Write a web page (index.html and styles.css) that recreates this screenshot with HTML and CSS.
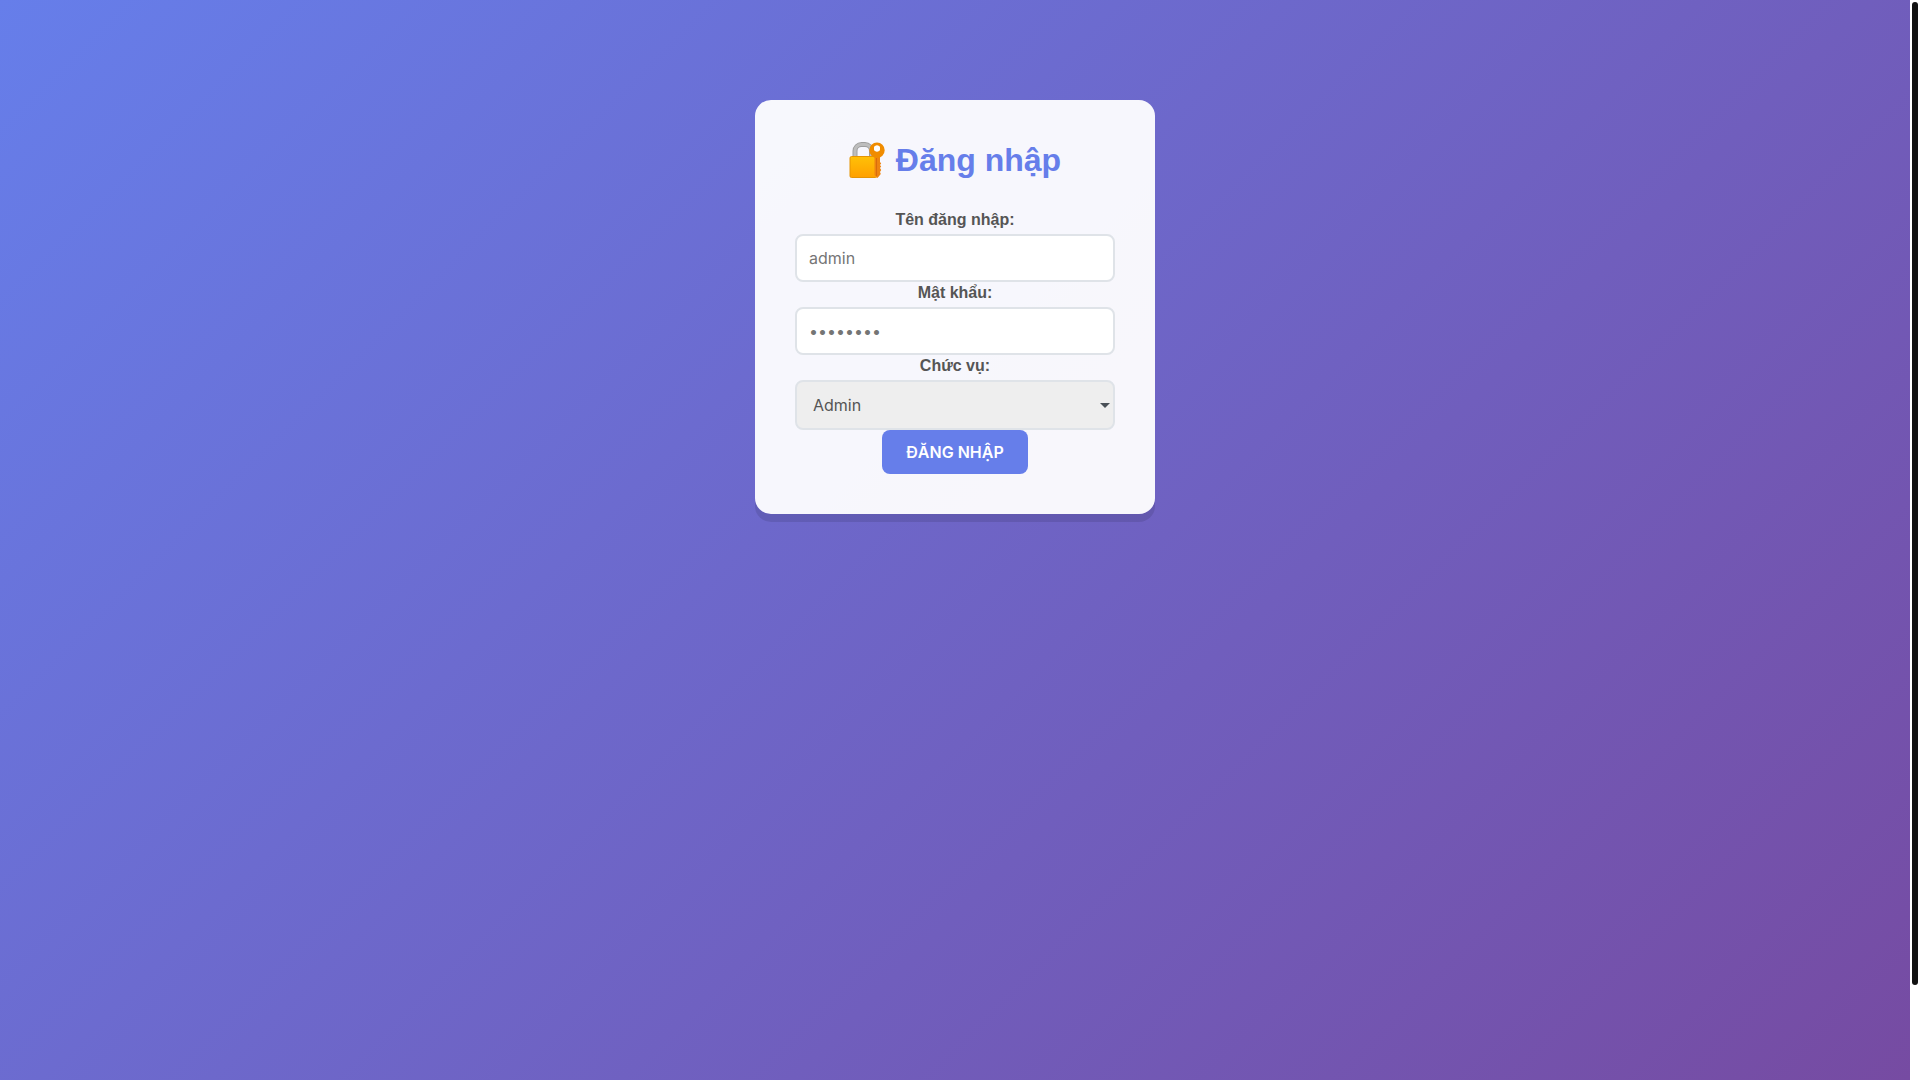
FILE: index.html
```html
<!DOCTYPE html>
<html lang="vi">
  <head>
    <meta charset="UTF-8" />
    <meta name="viewport" content="width=device-width, initial-scale=1.0" />
    <title>Đăng nhập</title>
    <link rel="stylesheet" href="styles.css">
  </head>
  <body>
    <div class="page">
      <main class="login-container">
        <h2>
          <svg class="lock-icon" viewBox="0 0 38 38" aria-hidden="true">
            <defs>
              <linearGradient id="lock-body" x1="0" y1="0" x2="0" y2="1">
                <stop offset="0" stop-color="#ffc107" />
                <stop offset="1" stop-color="#ffa000" />
              </linearGradient>
            </defs>
            <path d="M6 17V10a6.500 6.500 0 0 1 6.500-6.500H16a6.500 6.500 0 0 1 6.500 6.500V17" fill="none" stroke="#9e9e9e" stroke-width="5" />
            <path d="M6 17V10a6.500 6.500 0 0 1 6.500-6.500H16a6.500 6.500 0 0 1 6.500 6.500V17" fill="none" stroke="#bdbdbd" stroke-width="3" />
            <rect x="1" y="15.500" width="27" height="21" rx="1.500" fill="url(#lock-body)" stroke="#e59404" />
            <path d="M25.500 14H31v7l1.200 1.500L31 24l1.200 1.500L31 27l1.200 2-1.200 2 .8 2-3.300 4-3-3z" fill="#ee8410" />
            <path d="M27.500 17v18" stroke="#d96c0c" />
            <path fill-rule="evenodd" d="M28 1.500a7.700 7.700 0 0 1 0 15.400a7.700 7.700 0 0 1 0-15.400zM28 4.500a3 3 0 0 0 0 6a3 3 0 0 0 0-6z" fill="#f08c00" />
            <circle cx="28" cy="7.500" r="3" fill="#fff" />
          </svg>
          Đăng nhập
        </h2>
        <form class="login-form">
          <label for="username">Tên đăng nhập:</label>
          <input type="text" id="username" placeholder="admin" />
          <label for="password">Mật khẩu:</label>
          <input type="password" id="password" placeholder="••••••••" />
          <label for="role">Chức vụ:</label>
          <select id="role">
            <option value="admin">Admin</option>
          </select>
          <button type="submit" class="btn">ĐĂNG NHẬP</button>
        </form>
      </main>
    </div>
    <div class="scrollbar">
      <div class="scrollbar-thumb"></div>
    </div>
  </body>
</html>
```

FILE: styles.css
```css
* {
  box-sizing: border-box;
  margin: 0;
  padding: 0;
}
body {
  display: flex;
  min-height: 100vh;
  font-family: "Liberation Sans", Arial, sans-serif;
  color: #555;
}
.page {
  flex: 1;
  padding: 100px 0;
  background: linear-gradient(135deg, #667eea 0%, #764ba2 100%);
}
.scrollbar {
  width: 10px;
  padding: 2px;
  background: #fff;
}
.scrollbar-thumb {
  height: 91.4%;
  background: #111;
  border-radius: 3px;
}
.login-container {
  max-width: 400px;
  margin: 0 auto;
  padding: 40px;
  text-align: center;
  background: rgba(255, 255, 255, 0.95);
  border-radius: 16px;
  box-shadow: 0 8px 0 rgba(0, 0, 0, 0.1);
}
.login-container h2 {
  display: flex;
  justify-content: center;
  align-items: center;
  gap: 9px;
  margin-bottom: 29px;
  font-size: 32px;
  line-height: 40px;
  color: #667eea;
}
.lock-icon {
  width: 38px;
  height: 38px;
}
.login-form label {
  display: block;
  margin-bottom: 3px;
  line-height: 22px;
  font-weight: bold;
}
.login-form input,
.login-form select {
  display: block;
  width: 100%;
  height: 48px;
  padding: 12px;
  font-family: Inter, sans-serif;
  font-size: 16px;
  color: #555;
  background: #fff;
  border: 2px solid #dfe3e8;
  border-radius: 8px;
}
.login-form select {
  height: 50px;
  padding: 12px 16px;
  appearance: none;
  background: #eee url("data:image/svg+xml,%3Csvg xmlns='http://www.w3.org/2000/svg' width='10' height='5'%3E%3Cpath d='M0 0h10L5 5z' fill='%23495057'/%3E%3C/svg%3E") no-repeat right 3px center;
}
.btn {
  padding: 12px 24px;
  font-family: Inter, sans-serif;
  font-size: 16px;
  font-weight: 600;
  line-height: 20px;
  color: #fff;
  background: #667eea;
  border: none;
  border-radius: 8px;
  cursor: pointer;
}
```
